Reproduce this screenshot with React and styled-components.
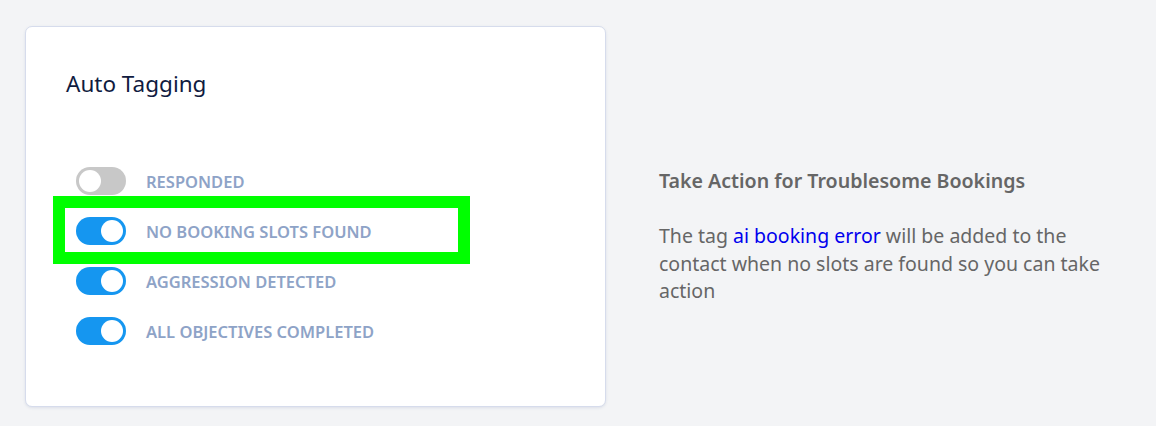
import React, { useState } from "react";
import styled, { createGlobalStyle } from "styled-components";

const GlobalStyle = createGlobalStyle`
	html, body {
		margin: 0;
		padding: 0;
		background: #f3f4f6;
		font-family: "Noto Sans", "Open Sans", sans-serif;
	}
`;

const tags = [
	{ id: "responded", label: "Responded", on: false },
	{ id: "no-slots", label: "No booking slots found", on: true, highlight: true },
	{ id: "aggression", label: "Aggression detected", on: true },
	{ id: "objectives", label: "All objectives completed", on: true },
];

const App = () => {
	const [state, setState] = useState(tags);

	const flip = (id) =>
		setState((prev) => prev.map((t) => (t.id === id ? { ...t, on: !t.on } : t)));

	return (
		<>
			<GlobalStyle />
			<Page>
				<Card>
					<Title>Auto Tagging</Title>
					<TagList>
						{state.map((t) => (
							<TagRow key={t.id} $highlight={t.highlight}>
								<Switch type="button" $on={t.on} onClick={() => flip(t.id)}>
									<Knob $on={t.on} />
								</Switch>
								<TagLabel>{t.label}</TagLabel>
							</TagRow>
						))}
					</TagList>
				</Card>
				<Info>
					<InfoHeading>Take Action for Troublesome Bookings</InfoHeading>
					<InfoText>
						The tag <TagLink>ai booking error</TagLink> will be added to the
						contact when no slots are found so you can take action
					</InfoText>
				</Info>
			</Page>
		</>
	);
};

const Page = styled.div`
	display: flex;
	align-items: flex-start;
	padding: 26px 0 0 25px;
	height: 426px;
	box-sizing: border-box;
`;

const Card = styled.section`
	width: 581px;
	height: 381px;
	box-sizing: border-box;
	background: #fff;
	border: 1px solid #d6dcec;
	border-radius: 7px;
	box-shadow: 0 1px 3px rgba(60, 80, 140, 0.12);
	padding: 42px 0 0 40px;
	display: flex;
	flex-direction: column;
`;

const Title = styled.h2`
	margin: 0;
	font-size: 22.5px;
	line-height: 30px;
	font-weight: 400;
	color: #101b3f;
`;

const TagList = styled.div`
	display: flex;
	flex-direction: column;
	gap: 22px;
	margin-top: 68px;
	padding-left: 10px;
`;

const TagRow = styled.div`
	position: relative;
	display: flex;
	align-items: center;
	gap: 20px;
	height: 28px;

	&::before {
		content: "";
		display: ${(p) => (p.$highlight ? "block" : "none")};
		position: absolute;
		left: -23px;
		top: -21px;
		width: 417px;
		height: 68px;
		box-sizing: border-box;
		border: 12px solid #00ff00;
		pointer-events: none;
	}
`;

const Switch = styled.button`
	position: relative;
	width: 50px;
	height: 28px;
	padding: 0;
	border: none;
	border-radius: 14px;
	background: ${(p) => (p.$on ? "#1596f0" : "#c8c8c8")};
	cursor: pointer;
	flex-shrink: 0;
`;

const Knob = styled.span`
	position: absolute;
	top: 3px;
	left: ${(p) => (p.$on ? "25px" : "3px")};
	width: 22px;
	height: 22px;
	border-radius: 50%;
	background: #fff;
`;

const TagLabel = styled.span`
	font-size: 16.5px;
	font-weight: 600;
	text-transform: uppercase;
	color: #8ea3c7;
`;

const Info = styled.div`
	margin: 141px 0 0 53px;
	width: 460px;
	color: #666;
`;

const InfoHeading = styled.h3`
	margin: 0;
	font-size: 19.6px;
	line-height: 28px;
	font-weight: 600;
	color: #666;
`;

const InfoText = styled.p`
	margin: 27px 0 0;
	font-size: 19.5px;
	line-height: 27.5px;
	color: #666;
`;

const TagLink = styled.span`
	color: #0000ee;
`;

export default App;
